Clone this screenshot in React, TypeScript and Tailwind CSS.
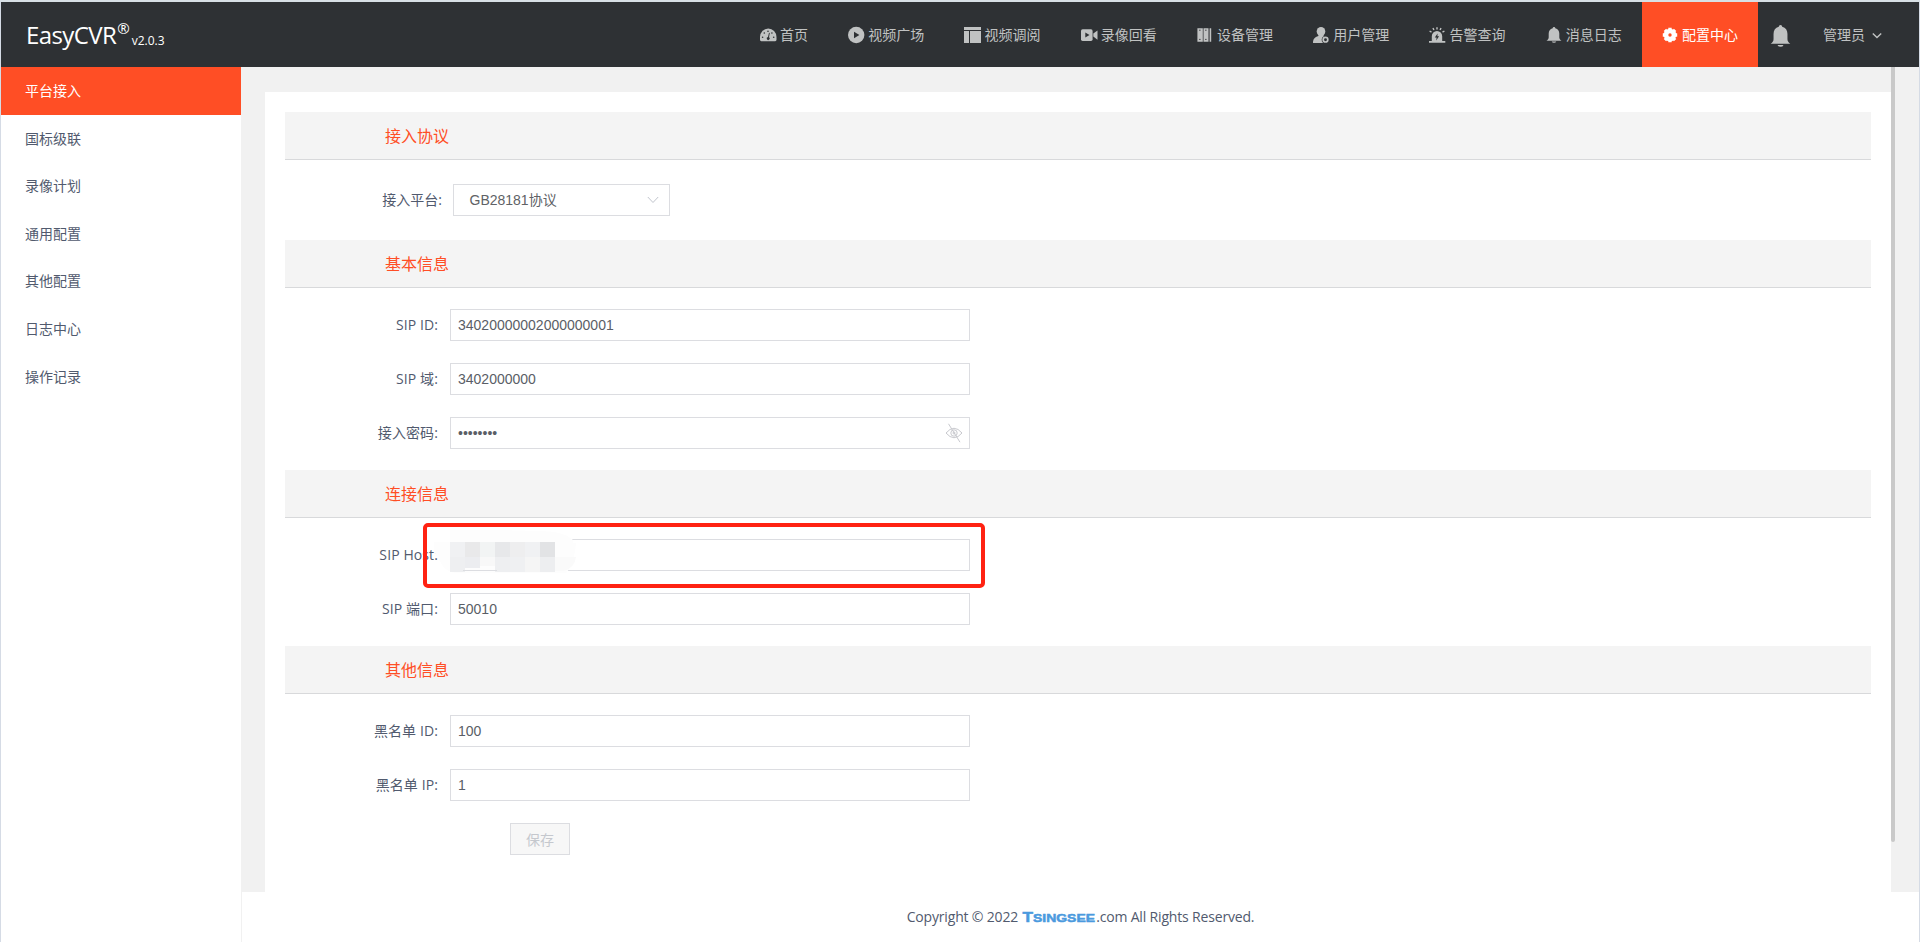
import type { ReactNode } from 'react';

const NAV: { label: string; icon: ReactNode; active?: boolean }[] = [
    {
        label: '首页',
        icon: (
            <>
                <path fill="currentColor" d="M1.5 14.2A1.4 1.4 0 0 1 0 12.8V10a8 8.3 0 0 1 16.5 0v2.8a1.4 1.4 0 0 1-1.5 1.4z" />
                <g fill="#2e3134">
                    <circle cx="2.6" cy="10.2" r=".8" />
                    <circle cx="4.3" cy="6" r=".8" />
                    <circle cx="8" cy="4.2" r=".8" />
                    <circle cx="11.9" cy="6" r=".8" />
                    <circle cx="13.7" cy="10.2" r=".8" />
                    <path d="M9 5.8l.8.2-.8 4.2a1.5 1.5 0 1 1-1-.2z" />
                </g>
            </>
        ),
    },
    {
        label: '视频广场',
        icon: (
            <>
                <circle cx="8.2" cy="8" r="8.2" fill="currentColor" />
                <path fill="#2e3134" d="M6 4.8v6.4l5.4-3.2z" />
            </>
        ),
    },
    {
        label: '视频调阅',
        icon: <path fill="currentColor" d="M0 0h17v3H0zM0 4h5v12H0zM6 4h11v12H6z" />,
    },
    {
        label: '录像回看',
        icon: (
            <>
                <rect x="0" y="2.3" width="11.6" height="11.6" rx="1.6" fill="currentColor" />
                <path fill="currentColor" d="M12.3 6.6L16.5 3.4v9.4l-4.2-3.2z" />
                <path fill="#2e3134" d="M4.3 5.5v5l4.2-2.5z" />
            </>
        ),
    },
    {
        label: '设备管理',
        icon: (
            <>
                <path fill="currentColor" d="M.4 1.2h5.4v13.6H.4zM6.5 1.2h5v13.6h-5zM12.6 1.2h1.6v13.6h-1.6z" />
                <path stroke="#2e3134" strokeWidth=".8" d="M2 3.2h1.6M8 3.2h1.6M2 12.4h1.6M8 12.4h1.6" />
            </>
        ),
    },
    {
        label: '用户管理',
        icon: (
            <>
                <ellipse cx="8" cy="4.6" rx="4.3" ry="4.6" fill="currentColor" />
                <path fill="currentColor" d="M5.6 7h4.8l.3 2.2 2.4 1.4L10 16H0c0-4 1.6-5.800 5.400-7z" />
                <circle cx="12.5" cy="12.7" r="3.8" fill="#2e3134" />
                <circle cx="12.5" cy="12.7" r="2.3" fill="none" stroke="currentColor" strokeWidth="1.7" />
            </>
        ),
    },
    {
        label: '告警查询',
        icon: (
            <>
                <path fill="currentColor" d="M2.8 14V9.2a5.2 5.2 0 0 1 10.4 0V14h3.1v1.8H0V14z" />
                <path stroke="currentColor" strokeWidth="1.4" d="M8 .2v2.2M4 1l.9 2M12 1l-.9 2M.6 4l1.9 1.2M15.4 4l-1.9 1.2" />
                <path fill="#2e3134" d="M8.6 6.4L5.8 10.6h1.8L7.2 13.4l2.9-4.2H8.4z" />
            </>
        ),
    },
    {
        label: '消息日志',
        icon: <Bell />,
    },
    {
        label: '配置中心',
        active: true,
        icon: (
            <>
                <circle cx="8" cy="8" r="4" fill="none" stroke="currentColor" strokeWidth="4.6" />
                <path stroke="currentColor" strokeWidth="3.4" d="M8 .8v2.4M8 12.8v2.4M.8 8h2.4M12.8 8h2.4M2.9 2.9l1.7 1.7M11.4 11.4l1.7 1.7M2.9 13.1l1.7-1.7M11.4 4.6l1.7-1.7" />
            </>
        ),
    },
];

const MENU = ['平台接入', '国标级联', '录像计划', '通用配置', '其他配置', '日志中心', '操作记录'];

function Bell() {
    return (
        <path
            fill="currentColor"
            d="M6.7 1.2a1.3 1.2 0 0 1 2.6 0c2.7.7 4 2.6 4 5.3v3.7c0 1.5.6 2.3 2.2 3.5H.5c1.6-1.2 2.2-2 2.2-3.5V6.5c0-2.7 1.3-4.6 4-5.3zM5.7 14.5h4.6a2.4 1.9 0 0 1-4.6 0z"
        />
    );
}

function SectionTitle({ children }: { children: ReactNode }) {
    return (
        <h2 className="h-12 border-b border-[#d8d9db] bg-[#f4f4f4] pl-[100px] text-base leading-[49px] text-[#ff4e25]">
            {children}
        </h2>
    );
}

function Field({ label, value, children }: { label: string; value: string; children?: ReactNode }) {
    return (
        <div className="relative flex h-8 items-center">
            <label className="w-[165px] pr-3 text-right tracking-[0.1px] whitespace-nowrap">{label}</label>
            <div className="flex h-8 w-[520px] items-center justify-between border border-[#dcdde1] pr-1.5 pl-[7px] font-['Liberation_Sans',sans-serif] text-[#5a5e66]">
                <span>{value}</span>
                {children}
            </div>
        </div>
    );
}

/* Pixelated patch that hides the host address */
function Mosaic() {
    const top = ['#f0f1f3', '#e9e9ea', '#f2f4f4', '#e7e8ea', '#eeeeef', '#f0f1f3', '#e2e3e5'];
    const bottom = ['#eeeff1', '#ecedf0', '#f8f8f8', '#eeeff1', '#eff0f2', '#f5f5f5', '#edeef0'];
    return (
        <svg className="absolute -top-[10px] left-[151px] overflow-visible" width="142" height="46" viewBox="0 0 142 46">
            <path fill="#fdfdfd" d="M14 1h50l38 1q26 0 35 9v3h3q-2 22-10 30H22q-13 0-18-12L-2 23V13h16z" />
            {top.map((fill, i) => (
                <rect key={i} x={14 + i * 15} y="13" width="15" height="15" fill={fill} />
            ))}
            {bottom.map((fill, i) => (
                <rect key={i} x={14 + i * 15} y="28" width="15" height={i === 2 ? 9 : i === 1 ? 11 : 15} fill={fill} />
            ))}
            <path fill="#fafafa" d="M119 28h21q-1 10-12 14h-9z" />
            <path stroke="#dcdde1" d="M27 41.500h34" />
        </svg>
    );
}

export default function App() {
    return (
        <div className="flex h-[942px] w-[1920px] flex-col overflow-hidden border-t-2 border-r border-l border-[#d5dbe5] border-t-[#d8e0e5] bg-white font-['Open_Sans','Noto_Sans_CJK_SC',sans-serif] text-sm text-[#515a6e]">
            <header className="flex h-[65px] shrink-0 items-center justify-between bg-[#2e3134] text-[#c0c2c2]">
                <div className="flex pl-[25px] text-white">
                    <span className="text-[24px] leading-[32px] tracking-[-0.6px]">EasyCVR</span>
                    <span className="ml-px text-[15px] leading-[18px]">®</span>
                    <span className="mt-[14px] ml-0.5 text-xs leading-4 font-medium">v2.0.3</span>
                </div>
                <nav className="flex h-full">
                    {NAV.map((item) => (
                        <a
                            key={item.label}
                            className={`flex h-full items-center gap-[4.25px] px-5 ${item.active ? 'bg-[#ff4e25] text-white' : ''}`}
                        >
                            <svg width="16" height="16" viewBox="0 0 16 16" className="overflow-visible">{item.icon}</svg>
                            <span className="whitespace-nowrap">{item.label}</span>
                        </a>
                    ))}
                    <a className="flex h-full items-center pr-8 pl-3">
                        <svg width="21" height="22" viewBox="0 0 16 16" preserveAspectRatio="none" className="mt-0.5 overflow-visible"><Bell /></svg>
                    </a>
                    <a className="flex h-full items-center gap-[7px] pr-[37px]">
                        <span>管理员</span>
                        <svg width="10" height="10" viewBox="0 0 10 10" fill="none" stroke="currentColor" strokeWidth="1.4">
                            <path d="M.8 3.400 5 7.600l4.200-4.200" />
                        </svg>
                    </a>
                </nav>
            </header>

            <div className="flex min-h-0 flex-1">
                <aside className="w-60 shrink-0">
                    {MENU.map((name, i) => (
                        <div
                            key={name}
                            className={`flex items-center pl-6 ${i === 0 ? 'h-12 bg-[#ff4e25] text-white' : 'h-[47.55px]'}`}
                        >
                            {name}
                        </div>
                    ))}
                </aside>

                <div className="flex min-w-0 flex-1 flex-col">
                    <main className="flex h-[825px] shrink-0 bg-[#f1f1f1] pl-6">
                        <div className="mt-[25px] w-[1626px] bg-white p-5">
                            <SectionTitle>接入协议</SectionTitle>
                            <div className="flex h-20 items-center">
                                <label className="w-[168px] pr-[11px] text-right">接入平台:</label>
                                <div className="flex h-8 w-[217px] items-center justify-between border border-[#dcdde1] pr-2.5 pl-[15.5px] font-['Liberation_Sans','Noto_Sans_CJK_SC',sans-serif] text-[#606266]">
                                    <span>GB28181协议</span>
                                    <svg width="12" height="8" viewBox="0 0 12 8" fill="none" stroke="#c0c4cc">
                                        <path d="M.8 1 6 6.500 11.200 1" />
                                    </svg>
                                </div>
                            </div>

                            <SectionTitle>基本信息</SectionTitle>
                            <div className="flex flex-col gap-[22px] py-[21px]">
                                <Field label="SIP ID:" value="34020000002000000001" />
                                <Field label="SIP 域:" value="3402000000" />
                                <Field label="接入密码:" value="••••••••">
                                    <svg width="18" height="20" viewBox="0 0 18 20" fill="none" stroke="#c8c9ce">
                                        <path d="M1 10q8-9.500 16 0-8 9.500-16 0zM3.500.8l11.500 18.400" />
                                        <circle cx="9" cy="10" r="3.2" />
                                        <circle cx="9" cy="10" r="1" />
                                    </svg>
                                </Field>
                            </div>

                            <SectionTitle>连接信息</SectionTitle>
                            <div className="relative flex flex-col gap-[22px] py-[21px]">
                                <Field label="SIP Host:" value="" />
                                <Field label="SIP 端口:" value="50010" />
                                <div className="absolute top-[21px] left-0">
                                    <Mosaic />
                                </div>
                                <div className="absolute top-[5px] left-[138px] h-[65px] w-[562px] rounded-[5px] border-4 border-[#ff2212]" />
                            </div>

                            <SectionTitle>其他信息</SectionTitle>
                            <div className="flex flex-col gap-[22px] pt-[21px]">
                                <Field label="黑名单 ID:" value="100" />
                                <Field label="黑名单 IP:" value="1" />
                                <button className="ml-[225px] h-8 w-[60px] border border-[#dcdde1] bg-[#f7f7f7] pt-px text-[#c5c8ce]">
                                    保存
                                </button>
                            </div>
                        </div>
                        <div className="h-[775px] w-1 rounded-b bg-[#c9c9c9]" />
                    </main>

                    <footer className="flex flex-1 items-center justify-center border-l border-[#f1f1f1] tracking-[-0.17px]">
                        <span>Copyright © 2022</span>
                        <svg width="74" height="20" className="ml-1 overflow-visible">
                            <g fill="#4b9ade" stroke="#4b9ade" strokeWidth=".5" className="font-['Liberation_Sans',sans-serif] font-bold tracking-normal">
                                <text x="0.5" y="15" fontSize="15" textLength="10.5" lengthAdjust="spacingAndGlyphs">T</text>
                                <text x="11" y="15" fontSize="11.5" textLength="62" lengthAdjust="spacingAndGlyphs">SINGSEE</text>
                            </g>
                        </svg>
                        <span>.com All Rights Reserved.</span>
                    </footer>
                </div>
            </div>
        </div>
    );
}
